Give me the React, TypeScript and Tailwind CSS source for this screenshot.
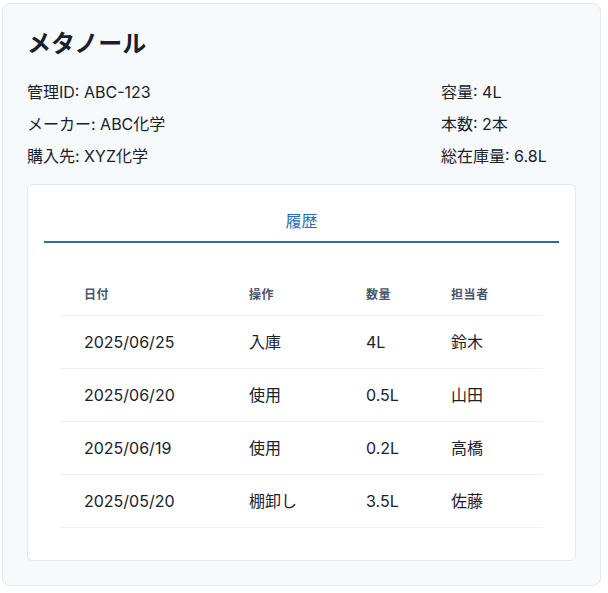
const rows = [
  { date: "2025/06/25", op: "入庫", qty: "4L", person: "鈴木" },
  { date: "2025/06/20", op: "使用", qty: "0.5L", person: "山田" },
  { date: "2025/06/19", op: "使用", qty: "0.2L", person: "高橋" },
  { date: "2025/05/20", op: "棚卸し", qty: "3.5L", person: "佐藤" },
];

export default function App() {
  return (
    <div className="min-h-[593px] bg-white pt-[3px] pl-[2px] font-['Inter','Noto_Sans_CJK_JP',sans-serif] text-[#1a202c]">
      <div className="w-[599px] rounded-lg border border-[#e2e8f0] bg-[#f7fafc] p-6">
        {/* 薬品の基本情報 */}
        <h1 className="text-2xl font-bold leading-8">メタノール</h1>
        <div className="mt-5 flex">
          <div className="flex w-[414px] flex-col gap-2 leading-6">
            <p>管理ID: ABC-123</p>
            <p>メーカー: ABC化学</p>
            <p>購入先: XYZ化学</p>
          </div>
          <div className="flex flex-col gap-2 leading-6">
            <p>容量: 4L</p>
            <p>本数: 2本</p>
            <p>総在庫量: 6.8L</p>
          </div>
        </div>

        {/* 履歴タブ */}
        <div className="mt-4 rounded-md border border-[#e2e8f0] bg-white p-4">
          <div className="flex">
            <button className="flex-1 border-b-2 border-[#2b6cb0] py-2 leading-6 text-[#2b6cb0]">
              履歴
            </button>
          </div>
          <div className="px-4 pt-8 pb-4">
            <table className="w-full table-fixed border-collapse">
              <thead>
                <tr className="border-b border-[#edf2f7]">
                  <th className="w-[165px] px-6 py-3 text-left text-xs font-bold leading-4 tracking-wider text-[#4a5568]">日付</th>
                  <th className="w-[117px] px-6 py-3 text-left text-xs font-bold leading-4 tracking-wider text-[#4a5568]">操作</th>
                  <th className="w-[85px] px-6 py-3 text-left text-xs font-bold leading-4 tracking-wider text-[#4a5568]">数量</th>
                  <th className="px-6 py-3 text-left text-xs font-bold leading-4 tracking-wider text-[#4a5568]">担当者</th>
                </tr>
              </thead>
              <tbody>
                {rows.map((r) => (
                  <tr key={r.date} className="border-b border-[#edf2f7]">
                    <td className="px-6 py-[14px] leading-6">{r.date}</td>
                    <td className="px-6 py-[14px] leading-6">{r.op}</td>
                    <td className="px-6 py-[14px] leading-6">{r.qty}</td>
                    <td className="px-6 py-[14px] leading-6">{r.person}</td>
                  </tr>
                ))}
              </tbody>
            </table>
          </div>
        </div>
      </div>
    </div>
  );
}
